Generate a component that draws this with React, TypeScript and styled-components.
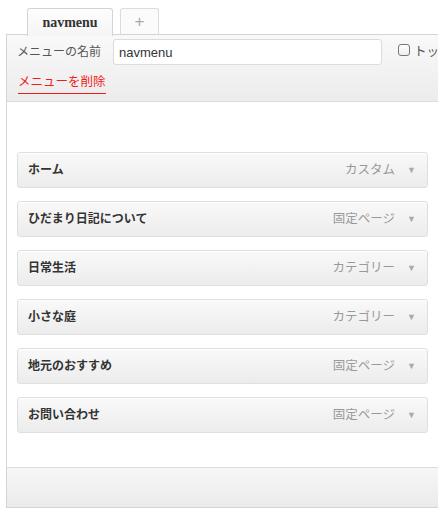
import * as React from 'react'
import styled, { createGlobalStyle } from 'styled-components'

const GlobalStyle = createGlobalStyle`
    html, body {
        margin: 0;
        padding: 0;
        background: #fff;
        overflow: hidden;
    }
    body {
        font-family: "Liberation Sans", "Noto Sans CJK JP", sans-serif;
        color: #333;
    }
`

interface MenuItem {
    title: string,
    type: string
}

const items: MenuItem[] = [
    { title: 'ホーム', type: 'カスタム' },
    { title: 'ひだまり日記について', type: '固定ページ' },
    { title: '日常生活', type: 'カテゴリー' },
    { title: '小さな庭', type: 'カテゴリー' },
    { title: '地元のおすすめ', type: '固定ページ' },
    { title: 'お問い合わせ', type: '固定ページ' },
]

const Wrap = styled.div`
    padding: 8px 0 0 6px;
    width: 450px;
`

const TabBar = styled.div`
    display: flex;
    gap: 7px;
    padding-left: 21px;
    height: 27px;
    margin-bottom: -1px;
    position: relative;
    z-index: 1;
`

const Tab = styled.div<{ $active?: boolean }>`
    box-sizing: border-box;
    display: flex;
    align-items: center;
    justify-content: center;
    border: 1px solid ${p => p.$active ? '#d4d4d4' : '#dcdcdc'};
    border-bottom: ${p => p.$active ? 'none' : '1px solid #d4d4d4'};
    border-radius: 3px 3px 0 0;
    background: ${p => p.$active ? 'linear-gradient(to bottom, #fdfdfd, #f5f5f5)' : '#fbfbfb'};
    width: ${p => p.$active ? '86px' : '39px'};
    height: ${p => p.$active ? '28px' : '27px'};
    font-family: ${p => p.$active ? '"Liberation Serif", "DejaVu Serif", serif' : '"Liberation Sans", sans-serif'};
    font-weight: ${p => p.$active ? 'bold' : 'normal'};
    font-size: ${p => p.$active ? '14px' : '17px'};
    color: ${p => p.$active ? '#333' : '#aaa'};
    padding-top: ${p => p.$active ? '0' : '1px'};
`

const Panel = styled.div`
    border: 1px solid #d4d4d4;
    border-right: none;
    background: #fff;
`

const Header = styled.div`
    box-sizing: border-box;
    height: 67px;
    background: linear-gradient(to bottom, #f9f9f9, #ececec);
    border-bottom: 1px solid #dcdcdc;
    padding: 4px 0 0 10px;
    overflow: hidden;
`

const NameRow = styled.div`
    display: flex;
    align-items: center;
    white-space: nowrap;
`

const Label = styled.label`
    font-size: 12px;
    color: #555;
    width: 96px;
    flex: none;
    margin-top: -4px;
`

const NameInput = styled.input`
    box-sizing: border-box;
    width: 269px;
    height: 26px;
    border: 1px solid #dcdcdc;
    border-radius: 3px;
    background: #fff;
    padding: 0 5px;
    font-family: "Liberation Sans", sans-serif;
    font-size: 13px;
    color: #333;
    outline: none;
    flex: none;
`

const AutoAdd = styled.label`
    display: flex;
    align-items: center;
    gap: 4px;
    margin-left: 16px;
    font-size: 12.5px;
    color: #555;
    margin-top: -4px;
`

const Check = styled.span`
    box-sizing: border-box;
    width: 12px;
    height: 12px;
    border: 1px solid #777;
    border-radius: 3px;
    background: linear-gradient(to bottom, #fff, #eee);
    flex: none;
`

const DeleteLink = styled.a`
    display: inline-block;
    margin-top: 9px;
    margin-left: 1px;
    font-size: 12.5px;
    line-height: 17px;
    color: #f21b1b;
    border-bottom: 1px solid #f21b1b;
    padding-bottom: 2px;
    text-decoration: none;
`

const Body = styled.div`
    display: flex;
    flex-direction: column;
    gap: 13px;
    padding: 50px 0 34px 10px;
`

const Item = styled.div`
    box-sizing: border-box;
    width: 411px;
    height: 36px;
    display: flex;
    align-items: center;
    border: 1px solid #dfdfdf;
    border-radius: 3px;
    background: linear-gradient(to bottom, #f9f9f9, #ececec);
    padding: 0 11px 3px 10px;
    box-shadow: inset 0 1px 0 #fff;
`

const ItemTitle = styled.span`
    flex: 1;
    font-size: 12px;
    font-weight: bold;
    color: #333;
`

const ItemType = styled.span`
    font-size: 12.5px;
    color: #999;
    margin-right: 12px;
`

const Arrow = styled.span`
    font-size: 9px;
    color: #aaa;
    padding-top: 3px;
`

const Footer = styled.div`
    height: 39px;
    border-top: 1px solid #dcdcdc;
    background: linear-gradient(to bottom, #f7f7f7, #ebebeb);
`

const App: React.FunctionComponent = (): React.ReactElement => {
    return (
        <Wrap>
            <GlobalStyle />
            <TabBar>
                <Tab $active>navmenu</Tab>
                <Tab>+</Tab>
            </TabBar>
            <Panel>
                <Header>
                    <NameRow>
                        <Label>メニューの名前</Label>
                        <NameInput defaultValue="navmenu" />
                        <AutoAdd><Check />トップレベルのページを自動的に追加</AutoAdd>
                    </NameRow>
                    <DeleteLink href="#">メニューを削除</DeleteLink>
                </Header>
                <Body>
                    {items.map((item: MenuItem, i: number) => (
                        <Item key={i.toString()}>
                            <ItemTitle>{item.title}</ItemTitle>
                            <ItemType>{item.type}</ItemType>
                            <Arrow>▼</Arrow>
                        </Item>
                    ))}
                </Body>
                <Footer />
            </Panel>
        </Wrap>
    )
}

export default App
